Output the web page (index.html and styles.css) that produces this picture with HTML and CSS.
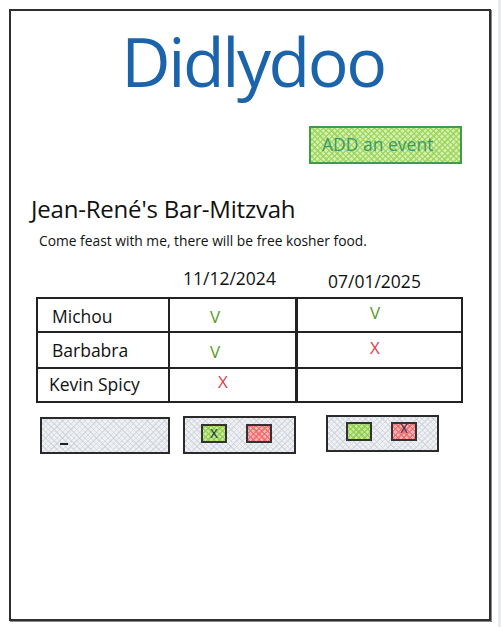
FILE: index.html
```html
<!DOCTYPE html>
<html lang="en">
<head>
<meta charset="utf-8">
<title>Didlydoo</title>
<link rel="stylesheet" href="styles.css">
</head>
<body>
<div class="page">
  <main class="frame">
    <h1 class="logo">Didlydoo</h1>
    <div class="actions">
      <button class="add-btn">ADD an event</button>
    </div>
    <section class="event">
      <h2 class="event-title">Jean-René's Bar-Mitzvah</h2>
      <p class="event-desc">Come feast with me, there will be free kosher food.</p>
      <div class="dates">
        <span></span>
        <span class="date d1">11/12/2024</span>
        <span class="date d2">07/01/2025</span>
      </div>
      <div class="grid">
        <div class="cell name">Michou</div>
        <div class="cell mark yes c2 r1">V</div>
        <div class="cell mark yes c3 r1">V</div>
        <div class="cell name">Barbabra</div>
        <div class="cell mark yes c2 r2">V</div>
        <div class="cell mark no c3 r2">X</div>
        <div class="cell name n3">Kevin Spicy</div>
        <div class="cell mark no c2 r3">X</div>
        <div class="cell mark c3"></div>
      </div>
      <div class="votes">
        <div class="box input-box"><span class="cursor"></span></div>
        <div class="box choice-box b2">
          <span class="chk green">X</span>
          <span class="chk red"></span>
        </div>
        <div class="box choice-box b3">
          <span class="chk green"></span>
          <span class="chk red">X</span>
        </div>
      </div>
    </section>
  </main>
</div>
</body>
</html>
```
FILE: styles.css
```css
* { box-sizing: border-box; }
html, body { margin: 0; padding: 0; background: #fff; }
body {
  width: 501px;
  height: 627px;
  overflow: hidden;
  font-family: "Open Sans", "Noto Sans", sans-serif;
  color: #111;
}
.page {
  height: 627px;
  padding: 9px 0 0 9px;
  border-right: 3px solid #e6eaf1;
}
.frame {
  width: 482px;
  height: 612px;
  border: 2px solid #2f2f2f;
  box-shadow: 1px 1px 0 #888;
  padding: 0;
}
.logo {
  margin: 5px 0 0 0;
  text-align: center;
  font-weight: 400;
  font-size: 68px;
  line-height: 90px;
  letter-spacing: -2.4px;
  color: #1b63aa;
  padding-left: 6px;
}
.actions {
  display: flex;
  justify-content: flex-end;
  margin-top: 20px;
  padding-right: 27px;
}
.add-btn {
  font-family: "Open Sans", "Noto Sans", sans-serif;
  font-size: 17.5px;
  color: #3a9a6a;
  width: 153px;
  height: 38px;
  text-align: left;
  padding: 0 0 2px 11px;
  border: 2px solid #3f9d48;
  background-color: #d3efae;
  background-image:
    repeating-linear-gradient(45deg, rgba(150,210,80,0.7) 0 1.5px, transparent 1.5px 4px),
    repeating-linear-gradient(-45deg, rgba(150,210,80,0.7) 0 1.5px, transparent 1.5px 4px);
}
.event { padding: 0 0 0 20px; }
.event-title {
  margin: 30px 0 0 0;
  font-weight: 400;
  font-size: 24px;
  line-height: 30px;
  letter-spacing: -0.2px;
}
.event-desc {
  margin: 8px 0 0 8px;
  font-size: 13.8px;
  line-height: 18px;
}
.dates, .grid {
  display: grid;
  margin-left: 5px;
}
.dates {
  grid-template-columns: 132px 128px 167px;
  margin-top: 9px;
  height: 38px;
  font-size: 17.5px;
  width: 427px;
}
.date { display: block; }
.d1 { padding: 7px 0 0 15px; }
.d2 { padding: 10px 0 0 32px; }
.grid {
  grid-template-columns: 132px 128px 163px;
  grid-template-rows: 34px 36px 32px;
  width: 427px;
  border: 2px solid #222;
}
.cell {
  border-right: 2px solid #222;
  border-bottom: 2px solid #222;
  font-size: 17.5px;
  line-height: 22px;
}
.cell:nth-child(3n) { border-right: none; }
.cell:nth-child(n+7) { border-bottom: none; }
.cell:nth-child(3n+2) { border-right-width: 3px; }
.name { padding: 6px 0 0 14px; }
.n3 { padding: 4px 0 0 11px; }
.mark { font-size: 17px; }
.yes { color: #5b9a28; }
.no { color: #e0404a; }
.c2 { padding-left: 40px; }
.c3 { padding-left: 72px; }
.r1.c2 { padding-top: 7px; }
.r1.c3 { padding-top: 3px; }
.r2.c2 { padding-top: 8px; }
.r2.c3 { padding-top: 4px; }
.r3.c2 { padding-top: 2px; padding-left: 48px; }
.votes {
  display: flex;
  align-items: flex-start;
  margin-top: 13px;
  margin-left: 9px;
}
.box {
  border: 2px solid #2a2a2a;
  background-color: #eef0f3;
  background-image:
    repeating-linear-gradient(45deg, rgba(200,206,214,0.6) 0 1px, transparent 1px 4px),
    repeating-linear-gradient(-45deg, rgba(200,206,214,0.6) 0 1px, transparent 1px 4px);
}
.input-box {
  width: 130px;
  height: 37px;
  margin-top: 1px;
}
.cursor {
  display: block;
  width: 8px;
  height: 1.5px;
  background: #222;
  margin: 24px 0 0 18px;
}
.choice-box {
  display: flex;
  align-items: flex-start;
  gap: 19px;
  width: 113px;
  height: 38px;
  padding: 6px 0 0 16px;
}
.b2 { margin-left: 13px; }
.b3 { margin-left: 30px; margin-top: -1px; height: 37px; padding-top: 5px; padding-left: 18px; }
.chk {
  width: 26px;
  height: 19px;
  border: 2px solid #333;
  font-size: 13px;
  line-height: 14px;
  text-align: center;
  color: #1a2a50;
}
.green {
  background-color: #c4ea98;
  background-image:
    repeating-linear-gradient(45deg, rgba(140,200,70,0.7) 0 1.5px, transparent 1.5px 4px),
    repeating-linear-gradient(-45deg, rgba(140,200,70,0.7) 0 1.5px, transparent 1.5px 4px);
}
.red {
  background-color: #ffb3b3;
  background-image:
    repeating-linear-gradient(45deg, rgba(240,100,100,0.7) 0 1.5px, transparent 1.5px 4px),
    repeating-linear-gradient(-45deg, rgba(240,100,100,0.7) 0 1.5px, transparent 1.5px 4px);
}
.b3 .red { line-height: 9px; }
```
